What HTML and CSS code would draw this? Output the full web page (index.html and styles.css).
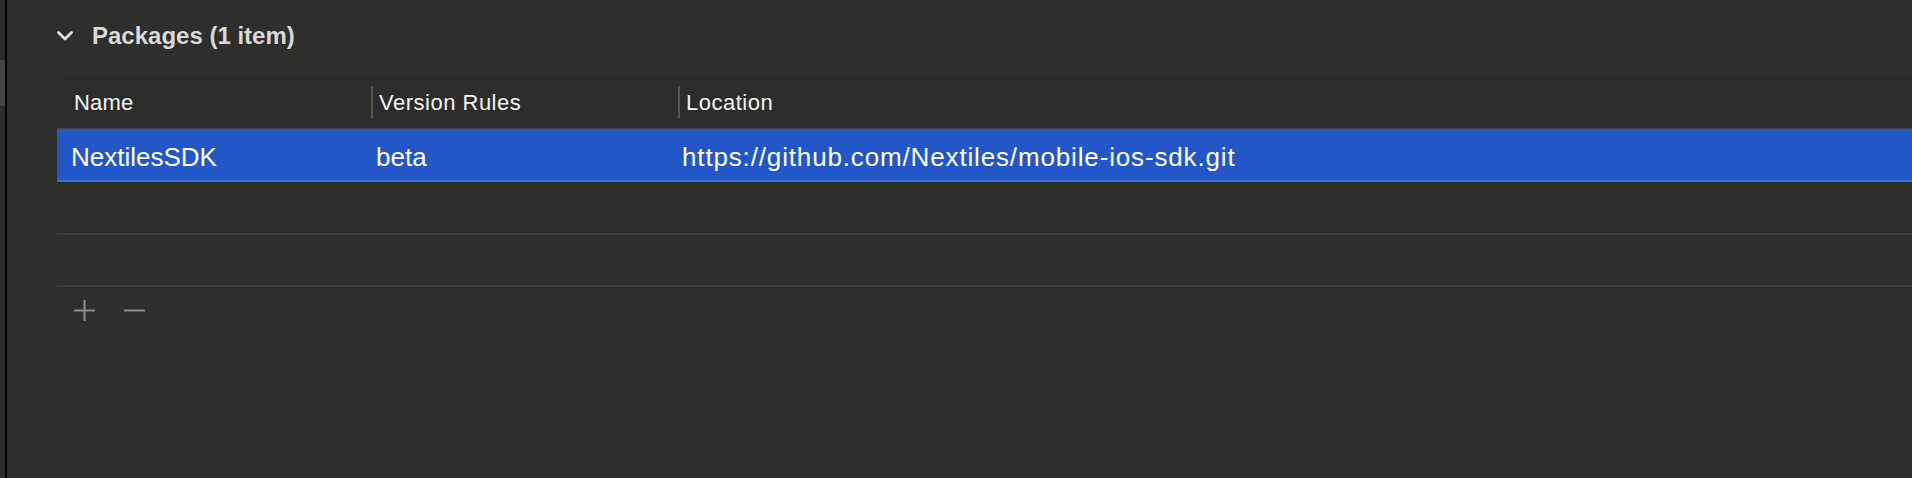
FILE: index.html
```html
<!DOCTYPE html>
<html>
<head>
<meta charset="utf-8">
<link rel="stylesheet" href="styles.css">
</head>
<body>
<div class="window">
  <div class="edge"><div class="edge-thumb"></div></div>
  <div class="divider"></div>
  <div class="main">
    <div class="section-head">
      <svg class="chevron" width="16" height="10" viewBox="0 0 16 10"><polyline points="1.5,1.5 8,8 14.5,1.5" fill="none" stroke="#e2e2e2" stroke-width="2.8" stroke-linecap="round" stroke-linejoin="round"/></svg>
      <span class="section-title">Packages (1 item)</span>
    </div>
    <div class="table">
      <div class="thead">
        <div class="th th-first">Name</div>
        <div class="th th-sep">Version Rules</div>
        <div class="th th-sep">Location</div>
      </div>
      <div class="row selected">
        <div class="td td-first">NextilesSDK</div>
        <div class="td td-second">beta</div>
        <div class="td td-third">https://github.com/Nextiles/mobile-ios-sdk.git</div>
      </div>
      <div class="row empty"></div>
      <div class="row empty"></div>
    </div>
    <div class="actions">
      <svg class="btn" width="21" height="21" viewBox="0 0 21 21"><path d="M10.5 0V21M0 10.5H21" stroke="#8d8d8d" stroke-width="2"/></svg>
      <svg class="btn" width="21" height="21" viewBox="0 0 21 21"><path d="M0 10.5H21" stroke="#8d8d8d" stroke-width="2"/></svg>
    </div>
  </div>
</div>
</body>
</html>
```
FILE: styles.css
```css
html, body {
  margin: 0;
  padding: 0;
  background: #2e2e2c;
  height: 100%;
  overflow: hidden;
}
body {
  font-family: "Liberation Sans", Arial, sans-serif;
  color: #f2f2f2;
}
.window {
  display: flex;
  height: 478px;
}
.edge {
  width: 5px;
  background: #2b2b2b;
  padding-top: 60px;
  box-sizing: border-box;
}
.edge-thumb {
  height: 46px;
  background: #454545;
}
.divider {
  width: 2px;
  background: #000;
}
.main {
  flex: 1;
  padding-left: 50px;
  padding-top: 22px;
  display: flex;
  flex-direction: column;
}
.section-head {
  display: flex;
  align-items: center;
  height: 28px;
}
.chevron {
  margin-right: 19px;
}
.section-title {
  font-size: 24px;
  font-weight: bold;
  color: #d9d9d9;
  line-height: 28px;
}
.table {
  margin-top: 25px;
}
.thead, .row {
  display: grid;
  grid-template-columns: 314px 307px 1fr;
}
.thead {
  height: 53px;
  background: #2c2c2a;
  border-bottom: 1px solid #4a4a4a;
  align-items: center;
}
.th {
  font-size: 22px;
  line-height: 25px;
  color: #f4f4f4;
  letter-spacing: 0.5px;
  padding-top: 1px;
}
.th-first {
  padding-left: 17px;
  letter-spacing: 0.2px;
}
.th-sep {
  border-left: 2px solid #555553;
  padding-left: 6px;
  height: 31px;
  display: flex;
  align-items: center;
}
.row {
  height: 50.5px;
  border-bottom: 2px solid #3f3f3d;
  align-items: center;
}
.row.selected {
  height: 51px;
  background: #2357c8;
  border-bottom: 2px solid #3c6fd8;
}
.td {
  font-size: 26px;
  line-height: 29px;
  color: #ffffff;
  padding-top: 5px;
  white-space: nowrap;
}
.td-first { padding-left: 14px; }
.td-second { padding-left: 5px; }
.td-third { padding-left: 4px; letter-spacing: 0.85px; }
.actions {
  display: flex;
  gap: 29px;
  padding-left: 17px;
  margin-top: 13px;
}
```
